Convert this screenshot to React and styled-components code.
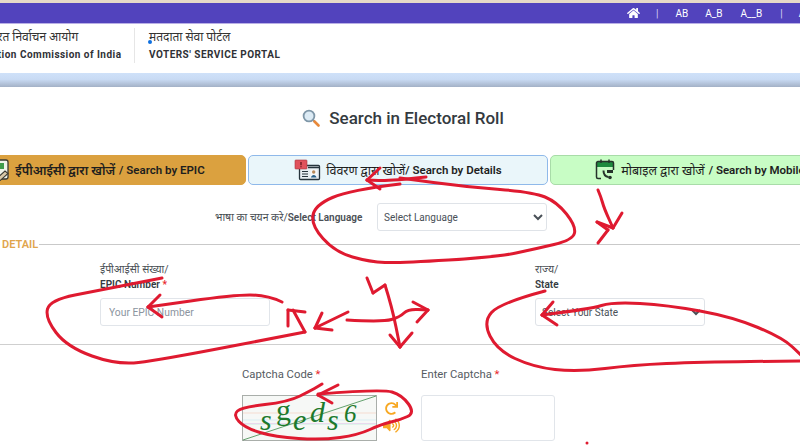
import React from 'react';
import styled, { createGlobalStyle } from 'styled-components';
import { FaHome, FaRedo, FaVolumeUp } from 'react-icons/fa';

const GlobalStyle = createGlobalStyle`
  html, body {
    margin: 0;
    padding: 0;
    background: #fff;
  }
  body {
    font-family: Roboto, "Noto Sans", "Noto Sans Devanagari", sans-serif;
  }
`;

const Page = styled.div`
  position: relative;
  width: 800px;
  height: 445px;
  overflow: hidden;
  background: #fff;
`;

const TopBar = styled.div`
  height: 20px;
  border-top: 3px solid #e6d9c8;
  border-bottom: 1px solid #b9b0e6;
  background: #5243bd;
  display: flex;
  align-items: center;
  padding-left: 627px;
  color: #fff;
  font-size: 10px;
  white-space: nowrap;
  svg {
    width: 13px;
    height: 12px;
    flex: none;
  }
`;

const Sep = styled.span`
  margin: 0 ${({ $after }) => $after}px 0 ${({ $before }) => $before}px;
  color: #d8d3f4;
`;

const NavItem = styled.span`
  margin-right: ${({ $gap }) => $gap}px;
`;

const Header = styled.header`
  height: 49px;
  display: flex;
  align-items: flex-start;
  padding-top: 4px;
  box-sizing: border-box;
  margin-left: -23px;
`;

const Brand = styled.div`
  box-sizing: border-box;
  width: 158px;
  padding: 1px 11px 0 0;
  height: 35px;
  border-right: 1px solid #e6e6e6;
  white-space: nowrap;
`;

const Portal = styled.div`
  padding: 1px 0 0 14px;
  white-space: nowrap;
`;

const BrandHindi = styled.div`
  font-size: 12px;
  line-height: 16px;
  color: #333;
  padding-left: ${({ $indent }) => $indent || 0}px;
`;

const BrandEnglish = styled.div`
  margin-top: 3px;
  font-size: 10px;
  line-height: 13px;
  font-weight: 700;
  letter-spacing: 0.47px;
  color: #2f3136;
`;

const Band = styled.div`
  height: 14px;
  background: linear-gradient(#cfe1f9 0%, #c9dbf4 45%, #a3b1c6 100%);
`;

const Title = styled.h1`
  margin: 20px 0 0;
  height: 22px;
  display: flex;
  justify-content: center;
  align-items: center;
  gap: 9px;
  font-size: 17px;
  font-weight: 500;
  color: #343a40;
  padding-left: 6px;
`;

const Tabs = styled.div`
  margin: 26px 0 0 -54px;
  display: flex;
  gap: 2px;
`;

const Tab = styled.div`
  box-sizing: border-box;
  flex: none;
  width: 300px;
  height: 30px;
  display: flex;
  align-items: center;
  justify-content: center;
  gap: 4px;
  border-radius: 5px;
  border: 1px solid ${({ $border }) => $border};
  background: ${({ $bg }) => $bg};
  font-size: 11.5px;
  font-weight: 500;
  color: #1e1e1e;
  white-space: nowrap;
  span {
    font-weight: ${({ $boldHindi }) => ($boldHindi ? 600 : 400)};
    font-size: 12.5px;
  }
  b {
    font-weight: 600;
    margin-left: ${({ $tight }) => ($tight ? -4 : 0)}px;
  }
`;

const LangRow = styled.div`
  margin-top: 18px;
  padding-left: 215px;
  display: flex;
  align-items: center;
  gap: 14px;
`;

const LangLabel = styled.div`
  width: 148px;
  font-size: 10.5px;
  color: #4a4f55;
  white-space: nowrap;
  b {
    font-size: 10px;
    font-weight: 600;
  }
`;

const Select = styled.select`
  box-sizing: border-box;
  width: 170px;
  height: 28px;
  padding: 0 2px;
  border: 1px solid #dfe3e8;
  border-radius: 3px;
  background: #fff;
  font-family: Roboto, sans-serif;
  font-size: 10px;
  color: #495057;
`;

const SectionHead = styled.div`
  margin-top: 7px;
  height: 12px;
  display: flex;
  align-items: center;
  gap: 1px;
  font-size: 11px;
  font-weight: 600;
  color: #e0a54c;
  margin-left: 2px;
  &::after {
    content: '';
    flex: 1;
    height: 1px;
    background: #c9c9c9;
  }
`;

const FieldRow = styled.div`
  margin-top: 12px;
  padding-left: 100px;
  display: grid;
  grid-template-columns: 435px 170px;
  padding-bottom: 18px;
  border-bottom: 1px solid #cfcfcf;
`;

const Field = styled.div`
  display: flex;
  flex-direction: column;
`;

const HindiLabel = styled.div`
  font-size: 10.5px;
  line-height: 15px;
  color: #4a4f55;
`;

const EnglishLabel = styled.div`
  margin: 1px 0 6px;
  font-size: 10px;
  line-height: 14px;
  font-weight: 600;
  color: #343a40;
`;

const Star = styled.span`
  color: #e8262b;
`;

const Input = styled.input`
  box-sizing: border-box;
  display: block;
  width: ${({ $w }) => $w}px;
  height: ${({ $h }) => $h}px;
  padding: 0 8px;
  border: 1px solid #e1e5ea;
  border-radius: 3px;
  font-family: Roboto, sans-serif;
  font-size: 10.3px;
  background: #fff;
  &::placeholder {
    color: #8b949e;
  }
`;

const CaptchaRow = styled.div`
  margin-top: 23px;
  padding-left: 242px;
  display: flex;
`;

const CaptchaCol = styled.div`
  width: 179px;
`;

const CaptchaLabel = styled.div`
  font-size: 11.3px;
  line-height: 14px;
  color: #555b62;
  margin-bottom: 13px;
`;

const CaptchaBox = styled.div`
  display: flex;
  gap: 4px;
`;

const CaptchaImage = styled.svg`
  display: block;
  width: 135px;
  height: 46px;
  flex: none;
`;

const CaptchaTools = styled.div`
  display: flex;
  flex-direction: column;
  align-items: center;
  gap: 2px;
  padding-top: 7px;
  color: #f7a823;
  width: 20px;
`;

const Annotation = styled.svg`
  position: absolute;
  left: 0;
  top: 0;
  pointer-events: none;
`;

const BlueDot = styled.i`
  position: absolute;
  left: 148px;
  top: 40px;
  width: 4px;
  height: 4px;
  border-radius: 50%;
  background: #0d6fe0;
`;

// smooth curve through hand-picked points
const curve = (pts) => {
  let d = `M${pts[0][0]} ${pts[0][1]}`;
  for (let i = 1; i < pts.length - 1; i++) {
    const mx = (pts[i][0] + pts[i + 1][0]) / 2;
    const my = (pts[i][1] + pts[i + 1][1]) / 2;
    d += ` Q${pts[i][0]} ${pts[i][1]} ${mx} ${my}`;
  }
  const last = pts[pts.length - 1];
  return `${d} L${last[0]} ${last[1]}`;
};

const strokes = [
  // language loop
  [[426, 177], [390, 181], [367, 180]],
  [[380, 168], [367, 180]],
  [[367, 180], [380, 189]],
  [[400, 184], [350, 190], [315, 205], [311, 225], [335, 252], [370, 262], [400, 263], [497, 257], [535, 249], [573, 240], [576, 226], [557, 202], [533, 192], [467, 187], [400, 178]],
  // arrow under mobile tab
  [[598, 190], [601, 197], [604, 208], [613, 228]],
  [[622, 213], [613, 228]],
  [[613, 228], [597, 222]],
  [[597, 222], [608, 230]],
  [[608, 230], [598, 243]],
  // epic loop
  [[162, 278], [100, 290], [50, 300], [45, 318], [67, 347], [117, 365], [160, 360], [305, 332]],
  [[305, 332], [293, 310]],
  [[288, 310], [305, 312]],
  [[288, 310], [288, 326]],
  [[282, 302], [267, 295], [233, 295], [148, 307]],
  [[160, 295], [148, 307]],
  [[148, 307], [162, 317]],
  // centre arrows
  [[348, 312], [315, 328]],
  [[322, 313], [315, 328]],
  [[315, 328], [332, 330]],
  [[347, 320], [383, 322], [400, 317], [408, 309], [428, 310]],
  [[413, 302], [428, 310]],
  [[428, 310], [417, 322]],
  [[367, 278], [373, 293]],
  [[373, 293], [385, 285]],
  [[385, 285], [392, 307], [400, 347]],
  [[412, 333], [400, 347]],
  [[400, 347], [390, 335]],
  // state loop
  [[545, 291], [500, 303], [483, 322], [497, 350], [533, 367], [577, 372], [633, 365], [700, 362], [800, 361]],
  [[553, 302], [542, 315]],
  [[542, 315], [557, 325]],
  [[542, 315], [590, 309], [613, 302], [667, 305], [733, 317], [783, 338], [802, 356]],
  // captcha loop
  [[318, 395], [338, 385]],
  [[318, 395], [332, 403]],
  [[318, 394], [382, 389], [402, 395], [415, 413], [400, 420], [382, 424], [358, 435], [322, 440], [275, 437], [245, 428], [233, 415], [242, 407], [288, 402], [312, 390], [322, 384]],
];

const MagnifierIcon = () => (
  <svg width="18" height="18" viewBox="0 0 18 18">
    <circle cx="7" cy="7" r="5.4" fill="#dcebf5" stroke="#7f97a8" strokeWidth="1.8" />
    <path d="M11 11l1.5 1.5" stroke="#7f97a8" strokeWidth="2" />
    <path d="M12.5 12.5l4 4" stroke="#e8893a" strokeWidth="2.6" strokeLinecap="round" />
  </svg>
);

const EpicIcon = () => (
  <svg width="24" height="22" viewBox="0 0 24 22">
    <rect x="6" y="1" width="15" height="19" rx="2" fill="#eef3ea" stroke="#3a3a32" strokeWidth="1.3" />
    <rect x="10" y="4" width="7" height="6" fill="#3f9c4c" />
    <path d="M9 20l9-8 3 2.500-9 8z" fill="#d8c9a8" stroke="#3a3a32" strokeWidth="1.100" />
  </svg>
);

const DetailsIcon = () => (
  <svg width="28" height="22" viewBox="0 0 28 22">
    <rect x="5.500" y="6.500" width="20" height="14" rx="1" fill="#e8eef2" stroke="#27343c" strokeWidth="1.300" />
    <path d="M14 8.500h11" stroke="#27343c" strokeWidth="1.500" />
    <rect x="1" y="1" width="12" height="9" rx="0.800" fill="#e0525c" stroke="#a8323c" strokeWidth="0.600" />
    <path d="M7 3v3.200M7 7.200v1" stroke="#5a1218" strokeWidth="1.200" />
    <path d="M8 12.500h6M8 15h6M8 17.500h6" stroke="#27343c" strokeWidth="1.200" />
    <rect x="16.500" y="10.500" width="6.500" height="8" fill="#f5f7f8" />
    <circle cx="19.700" cy="13" r="1.700" fill="#b98a5a" />
    <path d="M17 18.500c.3-3.400 5.200-3.400 5.500 0z" fill="#27608a" />
  </svg>
);

const MobileIcon = () => (
  <svg width="22" height="22" viewBox="0 0 22 22">
    <path d="M2 8V3h16v5z" fill="#1d8a3e" />
    <path d="M6 19.500H3a1.500 1.500 0 0 1-1.500-1.500V4A1.500 1.500 0 0 1 3 2.500h14A1.500 1.500 0 0 1 18.500 4v7" fill="none" stroke="#26332b" strokeWidth="1.500" />
    <path d="M6 .5v3.500M14 .5v3.500" stroke="#26332b" strokeWidth="1.500" />
    <path d="M8.500 11.500c0 3.500 1.500 6 5 6.500" fill="none" stroke="#26332b" strokeWidth="2" />
    <rect x="12" y="11" width="6" height="3" fill="#26332b" />
    <circle cx="15" cy="18.500" r="1.800" fill="#26332b" />
  </svg>
);

const Captcha = () => (
  <CaptchaImage viewBox="0 0 135 46">
    <rect x="0.500" y="0.500" width="134" height="45" fill="#f6f8f6" stroke="#a9aeaa" />
    <path d="M1 18h133" stroke="#f5dcd0" />
    <path d="M1 25h133" stroke="#d8eef2" />
    <path d="M1 29h133" stroke="#c8eee0" />
    <path d="M1 28.500h133" stroke="#f0c8f0" strokeWidth="0.600" />
    <path d="M1 45L134 1" stroke="#3d8a4a" strokeWidth="0.800" />
    <g fill="#1d7a2c" fontFamily="'Liberation Serif', serif" fontStyle="italic" fontSize="30">
      <text x="18" y="35">s</text>
      <text x="34" y="25" fontStyle="normal">g</text>
      <text x="51" y="35">e</text>
      <text x="68" y="27">d</text>
      <text x="85" y="35">s</text>
      <text x="102" y="27" fontSize="25">6</text>
    </g>
  </CaptchaImage>
);

const App = () => (
  <Page>
    <GlobalStyle />
    <TopBar>
      <FaHome />
      <Sep $before={16} $after={17}>|</Sep>
      <NavItem $gap={17}>AB</NavItem>
      <NavItem $gap={18}>A_B</NavItem>
      <NavItem $gap={16}>A__B</NavItem>
      <Sep $before={2} $after={16}>|</Sep>
      <NavItem $gap={0}>A</NavItem>
    </TopBar>
    <Header>
      <Brand>
        <BrandHindi $indent={9}>भारत निर्वाचन आयोग</BrandHindi>
        <BrandEnglish>Election Commission of India</BrandEnglish>
      </Brand>
      <Portal>
        <BrandHindi>मतदाता सेवा पोर्टल</BrandHindi>
        <BrandEnglish>VOTERS' SERVICE PORTAL</BrandEnglish>
      </Portal>
    </Header>
    <Band />
    <Title>
      <MagnifierIcon />
      Search in Electoral Roll
    </Title>
    <Tabs>
      <Tab $bg="#dba13f" $border="#dba13f" $boldHindi>
        <EpicIcon />
        <span>ईपीआईसी द्वारा खोजें</span> <b>/ Search by EPIC</b>
      </Tab>
      <Tab $bg="#eaf6fa" $border="#8fb9ea" $tight>
        <DetailsIcon />
        <span>विवरण द्वारा खोजें</span><b>/ Search by Details</b>
      </Tab>
      <Tab $bg="#c8fdc5" $border="#a8dca8">
        <MobileIcon />
        <span>मोबाइल द्वारा खोजें</span> <b>/ Search by Mobile</b>
      </Tab>
    </Tabs>
    <LangRow>
      <LangLabel>भाषा का चयन करे/<b>Select Language</b></LangLabel>
      <Select defaultValue="">
        <option value="">Select Language</option>
      </Select>
    </LangRow>
    <SectionHead>DETAIL</SectionHead>
    <FieldRow>
      <Field>
        <HindiLabel>ईपीआईसी संख्या/</HindiLabel>
        <EnglishLabel>EPIC Number <Star>*</Star></EnglishLabel>
        <Input $w={170} $h={28} placeholder="Your EPIC Number" />
      </Field>
      <Field>
        <HindiLabel>राज्य/</HindiLabel>
        <EnglishLabel>State</EnglishLabel>
        <Select defaultValue="">
          <option value="">Select Your State</option>
        </Select>
      </Field>
    </FieldRow>
    <CaptchaRow>
      <CaptchaCol>
        <CaptchaLabel>Captcha Code <Star>*</Star></CaptchaLabel>
        <CaptchaBox>
          <Captcha />
          <CaptchaTools>
            <FaRedo size={13} />
            <FaVolumeUp size={17} />
          </CaptchaTools>
        </CaptchaBox>
      </CaptchaCol>
      <CaptchaCol>
        <CaptchaLabel>Enter Captcha <Star>*</Star></CaptchaLabel>
        <Input $w={134} $h={46} />
      </CaptchaCol>
    </CaptchaRow>
    <BlueDot />
    <Annotation width="800" height="445" viewBox="0 0 800 445" fill="none" stroke="#df1a30" strokeWidth="3" strokeLinecap="round" strokeLinejoin="round">
      {strokes.map((pts, i) => <path key={i} d={curve(pts)} />)}
      <circle cx="587" cy="443" r="1.5" fill="#df1a30" stroke="none" />
    </Annotation>
  </Page>
);

export default App;
